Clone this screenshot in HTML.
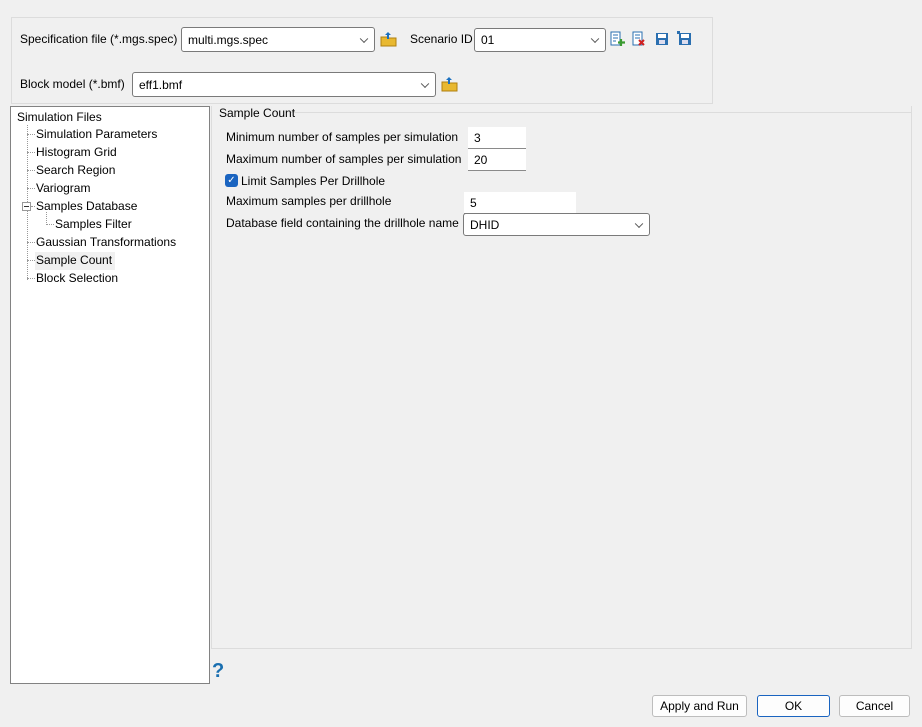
<!DOCTYPE html>
<html><head><meta charset="utf-8"><style>
*{box-sizing:border-box}
body{margin:0;width:922px;height:727px;background:#f0f0f0;font-family:"Liberation Sans",sans-serif;font-size:12px;color:#000;position:relative;overflow:hidden}
.a{position:absolute}
.box{position:absolute;background:#fff;border:1px solid #7a7a7a;border-radius:3px;padding-left:6px;line-height:normal;display:flex;align-items:center}
.in{position:absolute;background:#fff;border-bottom:1px solid #8a8a8a;padding-left:6px;display:flex;align-items:center}
.chev{position:absolute;right:7px;top:50%;width:6px;height:6px;border-right:1px solid #555;border-bottom:1px solid #555;transform:translateY(-70%) rotate(45deg)}
.btn{position:absolute;top:695px;height:22px;background:#fdfdfd;border:1px solid #bdbdbd;border-radius:3px;text-align:center;line-height:20px}
.tree div{position:absolute;white-space:nowrap}
.dot{position:absolute;border-top:1px dotted #999;width:8px}
</style></head><body>
<div class="a" style="left:11px;top:17px;width:702px;height:87px;border:1px solid #dcdcdc"></div>
<div class="a" style="left:20px;top:32px">Specification file (*.mgs.spec)</div>
<div class="box" style="left:181px;top:27px;width:194px;height:25px">multi.mgs.spec<span class="chev"></span></div>
<svg class="a" style="left:380px;top:31px" width="17" height="16"><path d="M1 6h6l1 1h8v8H1z" fill="#e8b830" stroke="#b08010"/><path d="M8 1l-3 3h2v4h2V4h2z" fill="#1a70c0"/></svg>
<div class="a" style="left:410px;top:32px">Scenario ID</div>
<div class="box" style="left:474px;top:28px;width:132px;height:24px">01<span class="chev"></span></div>
<svg class="a" style="left:610px;top:31px" width="86" height="16">
<rect x="1" y="1" width="9" height="13" fill="#fff" stroke="#2a6fb0"/><path d="M3 4h5M3 7h5M3 10h3" stroke="#2a6fb0"/><path d="M11 8v7M8 11.5h7" stroke="#3a9a30" stroke-width="2.2"/>
<rect x="23" y="1" width="9" height="13" fill="#fff" stroke="#2a6fb0"/><path d="M25 4h5M25 7h5" stroke="#2a6fb0"/><path d="M29 9l5 5M34 9l-5 5" stroke="#d02020" stroke-width="2"/>
<rect x="46" y="2" width="12" height="12" fill="#2a6fb0"/><rect x="48" y="3" width="8" height="4" fill="#fff"/><rect x="49" y="9" width="6" height="4" fill="#dde"/>
<rect x="69" y="2" width="12" height="12" fill="#2a6fb0"/><rect x="71" y="3" width="8" height="4" fill="#fff"/><rect x="72" y="9" width="6" height="4" fill="#dde"/><rect x="67" y="0" width="3" height="3" fill="#2a6fb0"/>
</svg>
<div class="a" style="left:20px;top:77px">Block model (*.bmf)</div>
<div class="box" style="left:132px;top:72px;width:304px;height:25px">eff1.bmf<span class="chev"></span></div>
<svg class="a" style="left:441px;top:76px" width="17" height="16"><path d="M1 6h6l1 1h8v8H1z" fill="#e8b830" stroke="#b08010"/><path d="M8 1l-3 3h2v4h2V4h2z" fill="#1a70c0"/></svg>

<div class="a tree" style="left:10px;top:106px;width:200px;height:578px;background:#fff;border:1px solid #828282">
<div style="left:6px;top:3px">Simulation Files</div>
<div class="a" style="left:16px;top:18px;height:155px;border-left:1px dotted #999"></div>
<span class="dot" style="left:16px;top:27px"></span><div style="left:25px;top:20px">Simulation Parameters</div>
<span class="dot" style="left:16px;top:45px"></span><div style="left:25px;top:38px">Histogram Grid</div>
<span class="dot" style="left:16px;top:63px"></span><div style="left:25px;top:56px">Search Region</div>
<span class="dot" style="left:16px;top:81px"></span><div style="left:25px;top:74px">Variogram</div>
<div style="left:11px;top:95px;width:9px;height:9px;border:1px solid #999;background:#fff"></div><div style="left:13px;top:99px;width:5px;height:1px;background:#333"></div>
<span class="dot" style="left:20px;top:99px;width:4px"></span><div style="left:25px;top:92px">Samples Database</div>
<div class="a" style="left:35px;top:105px;height:13px;border-left:1px dotted #999"></div>
<span class="dot" style="left:35px;top:117px"></span><div style="left:44px;top:110px">Samples Filter</div>
<span class="dot" style="left:16px;top:135px"></span><div style="left:25px;top:128px">Gaussian Transformations</div>
<div style="left:24px;top:145px;width:80px;height:18px;background:#f0f0f0"></div>
<span class="dot" style="left:16px;top:153px"></span><div style="left:25px;top:146px">Sample Count</div>
<span class="dot" style="left:16px;top:171px"></span><div style="left:25px;top:164px">Block Selection</div>
</div>

<div class="a" style="left:211px;top:106px;width:701px;height:543px;border:1px solid #dcdcdc;border-top:none"></div>
<div class="a" style="left:290px;top:112px;width:621px;border-top:1px solid #dcdcdc"></div>
<div class="a" style="left:219px;top:106px">Sample Count</div>
<div class="a" style="left:226px;top:130px">Minimum number of samples per simulation</div>
<div class="in" style="left:468px;top:127px;width:58px;height:22px">3</div>
<div class="a" style="left:226px;top:152px">Maximum number of samples per simulation</div>
<div class="in" style="left:468px;top:149px;width:58px;height:22px">20</div>
<div class="a" style="left:225px;top:174px;width:13px;height:13px;background:#1a64c0;border-radius:3px;color:#fff;font-size:10px;line-height:13px;text-align:center">✓</div>
<div class="a" style="left:241px;top:174px">Limit Samples Per Drillhole</div>
<div class="a" style="left:226px;top:194px">Maximum samples per drillhole</div>
<div class="in" style="left:464px;top:192px;width:112px;height:22px">5</div>
<div class="a" style="left:226px;top:216px">Database field containing the drillhole name</div>
<div class="box" style="left:463px;top:213px;width:187px;height:23px">DHID<span class="chev"></span></div>

<div class="a" style="left:212px;top:660px;font-weight:bold;font-size:20px;color:#1a6fb0">?</div>
<div class="btn" style="left:652px;width:95px">Apply and Run</div>
<div class="btn" style="left:757px;width:73px;border:1px solid #1a64c0">OK</div>
<div class="btn" style="left:839px;width:71px">Cancel</div>
</body></html>
